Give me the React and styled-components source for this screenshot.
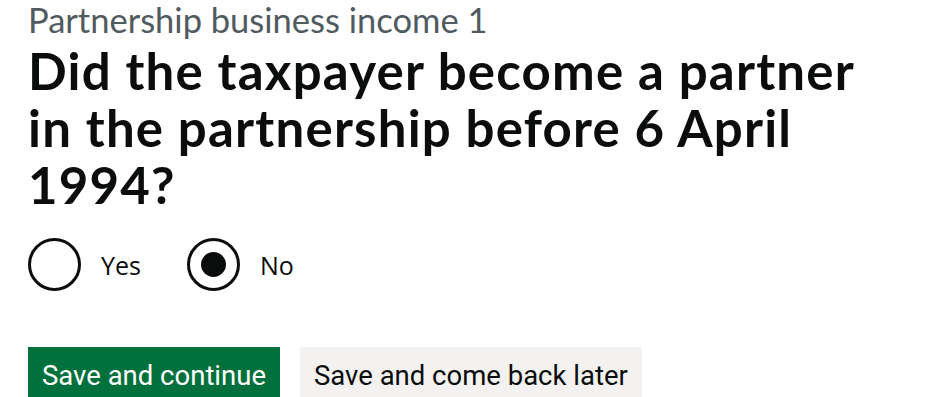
import styled, { createGlobalStyle } from "styled-components";

const Global = createGlobalStyle`
  body {
    margin: 0;
    background: #ffffff;
  }
`

const Page = styled.main`
  width: 939px;
  height: 397px;
  overflow: hidden;
  padding: 0 0 0 28px;
  box-sizing: border-box;
`

const Caption = styled.span`
  display: block;
  font-family: Lato, "Liberation Sans", sans-serif;
  font-size: 34.5px;
  line-height: 40px;
  color: #505a5f;
`

const Heading = styled.h1`
  margin: 2px 0 0;
  width: 870px;
  font-family: Lato, "Liberation Sans", sans-serif;
  font-weight: 700;
  font-size: 51px;
  letter-spacing: 1.2px;
  line-height: 57px;
  color: #0b0c0c;
`

const Radios = styled.div`
  display: flex;
  gap: 46px;
  margin-top: 25px;
`

const RadioItem = styled.label`
  display: flex;
  align-items: center;
  gap: 20px;
  font-family: "Open Sans", "Noto Sans", sans-serif;
  font-size: 25px;
  color: #0b0c0c;
`

const Circle = styled.span`
  width: 53px;
  height: 53px;
  border: 3px solid #0b0c0c;
  border-radius: 50%;
  box-sizing: border-box;
  display: flex;
  align-items: center;
  justify-content: center;
  &::after {
    content: "";
    display: ${p => (p.checked ? "block" : "none")};
    width: 25px;
    height: 25px;
    border-radius: 50%;
    background: #0b0c0c;
  }
`

const Actions = styled.div`
  display: flex;
  gap: 20px;
  margin-top: 56px;
`

const Button = styled.button`
  border: 0;
  padding: 0 14px;
  height: 56px;
  font-family: Roboto, "Liberation Sans", sans-serif;
  font-size: 27.5px;
  color: ${p => (p.secondary ? "#0b0c0c" : "#ffffff")};
  background: ${p => (p.secondary ? "#f3f2f1" : "#00703c")};
  cursor: pointer;
`

export default function App() {
  return (
    <Page>
      <Global />
      <Caption>Partnership business income 1</Caption>
      <Heading>
        Did the taxpayer become a partner in the partnership before 6 April 1994?
      </Heading>
      <Radios>
        <RadioItem>
          <Circle />
          Yes
        </RadioItem>
        <RadioItem>
          <Circle checked />
          No
        </RadioItem>
      </Radios>
      <Actions>
        <Button>Save and continue</Button>
        <Button secondary>Save and come back later</Button>
      </Actions>
    </Page>
  );
}
